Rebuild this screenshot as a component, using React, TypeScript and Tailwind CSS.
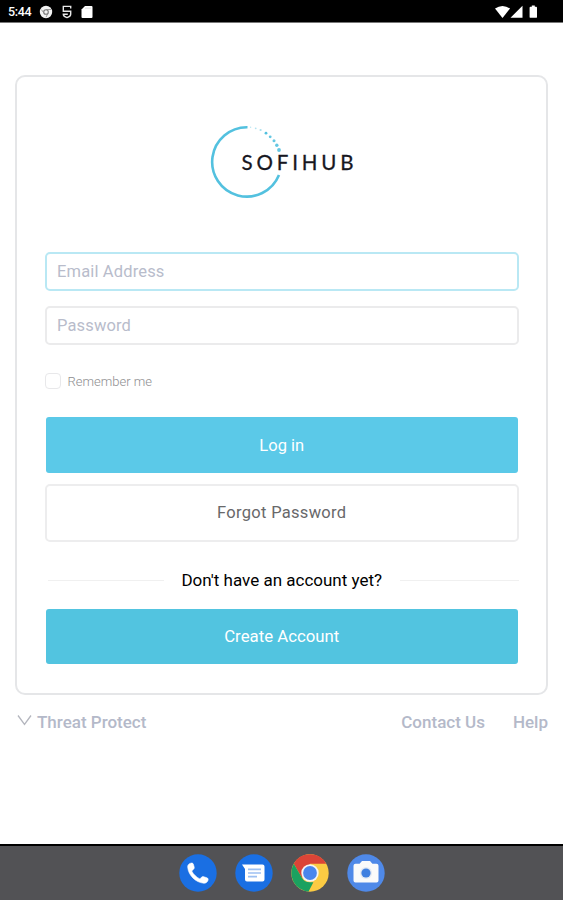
import { useState } from "react";

const LOGO_DOTS = [
  { x: 40.6, y: 2.3, r: 0.7, opacity: 0.4 },
  { x: 45.7, y: 3.3, r: 0.9, opacity: 0.45 },
  { x: 50.6, y: 5, r: 1.1, opacity: 0.5 },
  { x: 56, y: 8.2, r: 1.4, opacity: 1 },
  { x: 60.2, y: 11.8, r: 1.4, opacity: 0.9 },
  { x: 64, y: 15.8, r: 1.5, opacity: 0.9 },
  { x: 66.8, y: 20.3, r: 1.7, opacity: 0.9 },
  { x: 69, y: 25, r: 1.9, opacity: 0.9 },
];

function Logo() {
  return (
    <svg width="144" height="74" viewBox="0 0 144 74" aria-label="SOFIHUB">
      <path d="M37.5 2.2A34.7 34.7 0 1 0 69 50" fill="none" stroke="#53c1df" strokeWidth="2.6" />
      {LOGO_DOTS.map((dot) => (
        <circle key={dot.x} cx={dot.x} cy={dot.y} r={dot.r} fill="#53c1df" opacity={dot.opacity} />
      ))}
      <text
        x="31.5"
        y="44.7"
        textLength="112"
        className="fill-[#17171f] font-['Lato',sans-serif] text-[20.5px] font-normal"
        stroke="#17171f"
        strokeWidth="0.3"
      >
        SOFIHUB
      </text>
    </svg>
  );
}

function StatusBar() {
  return (
    <header className="flex h-[23px] shrink-0 items-center border-b border-[#777] bg-black pt-px pr-[25px] pl-2 text-white">
      <span className="w-[25px] pt-px text-[12.5px] leading-none font-medium tracking-tight">5:44</span>
      <svg className="ml-[6px]" width="14" height="14" viewBox="0 0 14 14">
        <circle cx="7" cy="7" r="6.2" fill="#f2f2f2" />
        <circle cx="7" cy="7" r="2.3" fill="none" stroke="#777" strokeWidth="1.1" />
        <path d="M7 4.5h5M5 8.2 2.4 4.6M9 8.2l-2 4" stroke="#888" strokeWidth="0.8" />
      </svg>
      <svg className="ml-[9px]" width="10" height="14" viewBox="0 0 10 14" fill="none" stroke="#e8e8e8" strokeWidth="1.4">
        <path d="M8.7 3.6V1.4H1.3v4.8h7.4v3C8.7 11 7 12 5 12.6 3 12 1.3 11 1.3 9.2h4.5" />
      </svg>
      <svg className="ml-[9px]" width="12" height="14" viewBox="0 0 12 14">
        <path d="M4 1h6.5a1 1 0 0 1 1 1v10a1 1 0 0 1-1 1h-9a1 1 0 0 1-1-1V4.5z" fill="#fff" />
        <path d="M5 2.5V4M7 2.5V4M9 2.5V4" stroke="#bbb" strokeWidth="0.7" />
      </svg>
      <svg className="ml-auto" width="43" height="14" viewBox="0 0 43 14" fill="#fff">
        <path d="M0 3.5Q7.5-1.5 15 3.5L7.5 13z" />
        <path d="M27.5.7v12h-12z" />
        <path d="M35.5 1.8h1.3V.6h3v1.2h1.3q.9 0 .9.9v9.2q0 .9-.9.9h-5.6q-.9 0-.9-.9V2.7q0-.9.9-.9z" />
      </svg>
    </header>
  );
}

function Dock() {
  return (
    <nav className="flex h-14 shrink-0 items-center justify-center gap-[18px] border-t-2 border-black bg-[#525255]">
      <svg width="38" height="38" viewBox="0 0 38 38" aria-label="Phone">
        <circle cx="19" cy="19" r="18.7" fill="#1a6fe3" />
        <path
          d="M11.7 9.2c-1.9.5-3.2 1.8-3 4.1.7 8 7.9 15.2 16 15.9 2.300.2 3.900-1.200 4.400-3.200.2-1-.3-1.900-1.200-2.200l-3.200-1.100c-.8-.3-1.600-.1-2.200.5l-1.700 1.700c-3.500-1.800-6.300-4.500-8.100-7.900l1.900-1.800c.6-.6.8-1.300.6-2.100l-.9-3c-.3-.8-1.200-1.300-2.600-.9z"
          fill="#fff"
          stroke="#fff"
          strokeWidth="0.6"
        />
      </svg>
      <svg width="38" height="38" viewBox="0 0 38 38" aria-label="Messages">
        <circle cx="19" cy="19" r="18.7" fill="#1a6fe3" />
        <path d="M7 10.5h20.5a2 2 0 0 1 2 2v13a2 2 0 0 1-2 2H12a2 2 0 0 1-2-2V15z" fill="#fff" />
        <path d="M13 15.3h13M13 19h13M13 22.7h9" stroke="#9dc0f2" strokeWidth="1.7" />
      </svg>
      <svg width="38" height="38" viewBox="0 0 38 38" aria-label="Chrome">
        <circle cx="19" cy="19" r="18.7" fill="#fbcb43" />
        <path d="M2.8 9.65A18.7 18.7 0 0 1 35.2 9.65H19L10.9 23.7z" fill="#db4437" />
        <path d="M2.8 9.65 10.9 23.7Q13.6 28.3 19 28.3H22.4L17.6 37.6A18.7 18.7 0 0 1 2.8 9.65z" fill="#1ba160" />
        <circle cx="19" cy="19" r="8.7" fill="#f4f4f4" />
        <circle cx="19" cy="19" r="6.9" fill="#4a86ed" />
      </svg>
      <svg width="38" height="38" viewBox="0 0 38 38" aria-label="Camera">
        <circle cx="19" cy="19" r="18.7" fill="#4f89e8" />
        <path
          d="M15 7h8l2.4 2.8h4.1a2 2 0 0 1 2 2v14.7a2 2 0 0 1-2 2h-21a2 2 0 0 1-2-2V11.8a2 2 0 0 1 2-2h4.1z"
          fill="#fafafa"
        />
        <circle cx="19" cy="19" r="6" fill="#e3e9f3" />
        <circle cx="19" cy="19" r="4.6" fill="#3f7fe0" />
      </svg>
    </nav>
  );
}

export default function App() {
  const [email, setEmail] = useState("");
  const [password, setPassword] = useState("");
  const [remember, setRemember] = useState(false);

  return (
    <div className="flex h-[900px] w-[563px] flex-col overflow-hidden bg-white font-['Roboto',sans-serif] text-base">
      <StatusBar />

      <main className="flex-1 px-[15px] pt-[52px]">
        <section className="flex h-[620px] w-[533px] flex-col rounded-[10px] border-2 border-[#e5e6e8] pr-[27px] pl-[27.5px]">
          <div className="flex h-[175px] justify-center pt-[48px]">
            <Logo />
          </div>

          <form onSubmit={(e) => e.preventDefault()} className="flex flex-col">
            <input
              type="email"
              value={email}
              onChange={(e) => setEmail(e.target.value)}
              placeholder="Email Address"
              className="h-[39px] rounded-[5px] border-2 border-[#b9e8f4] px-[10.5px] pb-px text-[16.5px] tracking-[0.15px] outline-none placeholder:text-[#b8bccb]"
            />
            <input
              type="password"
              value={password}
              onChange={(e) => setPassword(e.target.value)}
              placeholder="Password"
              className="mt-[15px] h-[39px] rounded-[5px] border-2 border-[#ebebec] px-[10.5px] pb-px text-[16.5px] tracking-[0.15px] outline-none placeholder:text-[#b8bccb]"
            />

            <label className="mt-[28px] flex h-4 items-center gap-[7px] text-[13px] font-light text-[#8e8e90]">
              <input
                type="checkbox"
                checked={remember}
                onChange={(e) => setRemember(e.target.checked)}
                className="size-4 appearance-none rounded-[4px] border-[1.5px] border-[#e8e8ea] checked:bg-[#5bc9e8]"
              />
              <span className="pt-px">Remember me</span>
            </label>

            <button type="submit" className="mx-px mt-[28px] h-[56px] rounded-[3px] bg-[#5bc9e8] pt-0.5 text-[16.5px] text-white">
              Log in
            </button>
            <button type="button" className="mt-[11px] h-[58px] rounded-[5px] border-2 border-[#ededee] pt-px text-[16.5px] tracking-[0.3px] text-[#68686a]">
              Forgot Password
            </button>
          </form>

          <div className="mt-[26px] flex h-6 items-center text-[17px] text-black">
            <span className="ml-[3px] h-px w-[116px] bg-[#f0f0f0]" />
            <span className="flex-1 pt-px text-center">Don't have an account yet?</span>
            <span className="h-px w-[119px] bg-[#f0f0f0]" />
          </div>

          <button type="button" className="mx-px mt-[17px] h-[55px] rounded-[3px] bg-[#52c4e0] text-[16.8px] text-white">
            Create Account
          </button>
        </section>

        <footer className="mt-[16px] flex h-6 items-center text-[17px] font-medium text-[#b4b9c9]">
          <svg className="mr-[5px] mb-[6px] ml-[2px]" width="15" height="12" viewBox="0 0 15 12" fill="none" stroke="#b4b6be" strokeWidth="1.3">
            <path d="M1 1.5 7.5 10.5 14 1.5" />
          </svg>
          <span>Threat Protect</span>
          <span className="ml-auto">Contact Us</span>
          <span className="ml-[28px]">Help</span>
        </footer>
      </main>

      <Dock />
    </div>
  );
}
